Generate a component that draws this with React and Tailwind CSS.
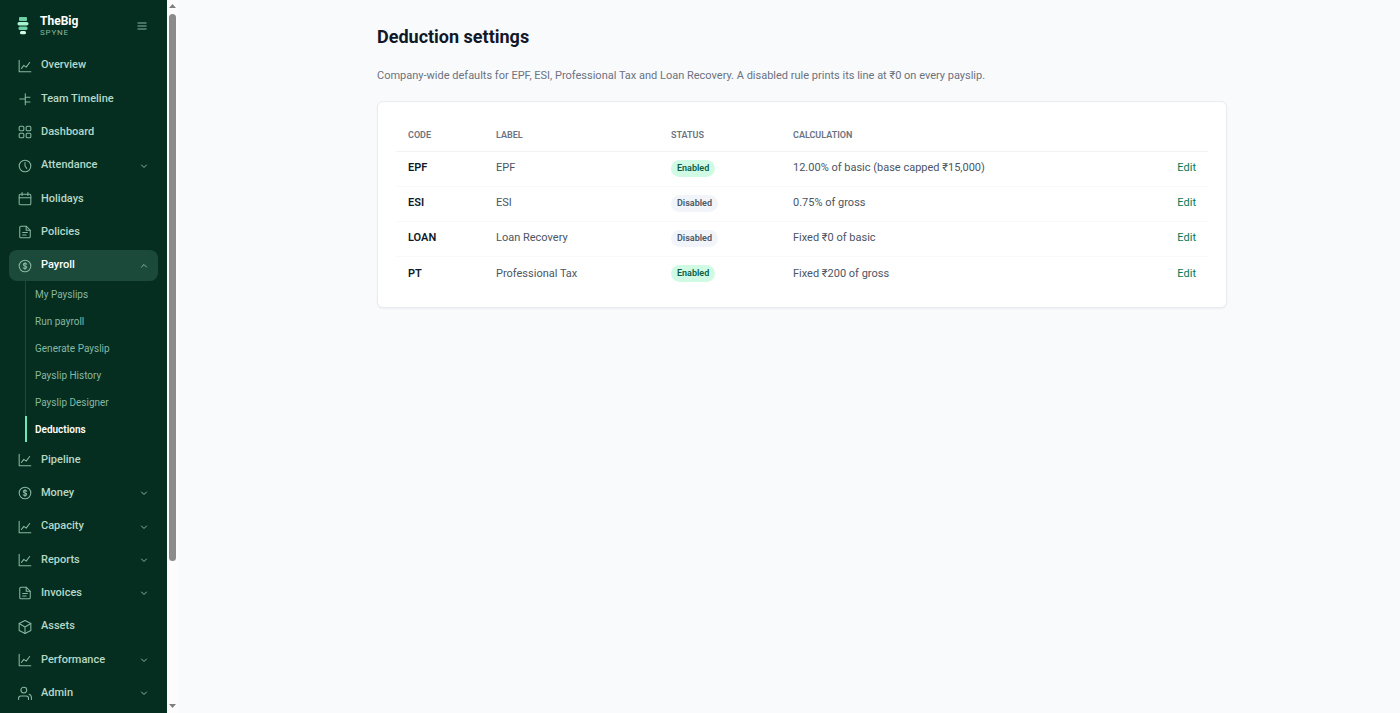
import { useState } from 'react'

const ICONS = {
  chart: (
    <>
      <path d="M2 2v20h20" />
      <path d="m6 16 4-5 4 3 6-8" />
    </>
  ),
  timeline: (
    <>
      <path d="M12.500 3v19" />
      <path d="M3 12h9" />
      <path d="M12.500 9h8" />
      <path d="M12.500 17h8" />
    </>
  ),
  grid: (
    <>
      <rect x="2" y="2" width="8" height="8" rx="2" />
      <rect x="14" y="2" width="8" height="8" rx="2" />
      <rect x="2" y="14" width="8" height="8" rx="2" />
      <rect x="14" y="14" width="8" height="8" rx="2" />
    </>
  ),
  clock: (
    <>
      <circle cx="12" cy="12" r="10" />
      <path d="M12 6v6l3 4" />
    </>
  ),
  calendar: (
    <>
      <rect x="2" y="4" width="20" height="18" rx="2" />
      <path d="M2 10h20M7 1v5M17 1v5" />
    </>
  ),
  file: (
    <>
      <path d="M14 2H5a2 2 0 0 0-2 2v16a2 2 0 0 0 2 2h14a2 2 0 0 0 2-2V9z" />
      <path d="M14 2v7h7M8 13h8M8 17h6" />
    </>
  ),
  coin: (
    <>
      <circle cx="12" cy="12" r="10" />
      <path d="M15 9c-.6-1-1.700-1.500-3-1.500-1.700 0-3 .8-3 2.200 0 3.100 6 1.500 6 4.600 0 1.400-1.300 2.200-3 2.200-1.400 0-2.500-.6-3-1.500M12 6v12" />
    </>
  ),
  box: (
    <>
      <path d="m12 1 10 5v12l-10 5-10-5V6z" />
      <path d="m2 6 10 6 10-6M12 12v11" />
    </>
  ),
  users: (
    <>
      <circle cx="10" cy="7" r="5" />
      <path d="M1 23v-2a4 4 0 0 1 4-4h9a4 4 0 0 1 4 4v2M19 14c3 1 4 3 4 6v3" />
    </>
  ),
}

const NAV = [
  { label: 'Overview', icon: 'chart' },
  { label: 'Team Timeline', icon: 'timeline' },
  { label: 'Dashboard', icon: 'grid' },
  { label: 'Attendance', icon: 'clock', group: true },
  { label: 'Holidays', icon: 'calendar' },
  { label: 'Policies', icon: 'file' },
  {
    label: 'Payroll',
    icon: 'coin',
    group: true,
    children: [
      'My Payslips',
      'Run payroll',
      'Generate Payslip',
      'Payslip History',
      'Payslip Designer',
      'Deductions',
    ],
  },
  { label: 'Pipeline', icon: 'chart' },
  { label: 'Money', icon: 'coin', group: true },
  { label: 'Capacity', icon: 'chart', group: true },
  { label: 'Reports', icon: 'chart', group: true },
  { label: 'Invoices', icon: 'file', group: true },
  { label: 'Assets', icon: 'box' },
  { label: 'Performance', icon: 'chart', group: true },
  { label: 'Admin', icon: 'users', group: true },
]

const RULES = [
  { code: 'EPF', label: 'EPF', enabled: true, calc: '12.00% of basic (base capped ₹15,000)' },
  { code: 'ESI', label: 'ESI', enabled: false, calc: '0.75% of gross' },
  { code: 'LOAN', label: 'Loan Recovery', enabled: false, calc: 'Fixed ₹0 of basic' },
  { code: 'PT', label: 'Professional Tax', enabled: true, calc: 'Fixed ₹200 of gross' },
]

function Icon({ name }) {
  return (
    <svg
      viewBox="0 0 24 24"
      className="size-[14px] shrink-0 overflow-visible text-[#86b8a2]"
      fill="none"
      stroke="currentColor"
      strokeWidth="1.800"
      strokeLinecap="round"
      strokeLinejoin="round"
      aria-hidden="true"
    >
      {ICONS[name]}
    </svg>
  )
}

function Chevron({ up }) {
  return (
    <svg
      viewBox="0 0 8 8"
      className="ml-auto size-2 text-[#86b8a2]"
      fill="none"
      stroke="currentColor"
      strokeLinecap="round"
      strokeLinejoin="round"
      aria-hidden="true"
    >
      <path d={up ? 'm1.500 5 2.500-2.500L6.500 5' : 'm1.500 3 2.500 2.500L6.500 3'} />
    </svg>
  )
}

function Logo() {
  return (
    <svg viewBox="0 0 12 18" className="h-[18px] w-3 shrink-0" aria-hidden="true">
      <rect x="2" y="0" width="8" height="4" rx="1" fill="#6fcfa5" />
      <rect x="0.500" y="5" width="11" height="3.400" rx="1.600" fill="#a7f3d0" />
      <rect x="1.500" y="9.400" width="9" height="3.600" rx="1.500" fill="#6fcfa5" />
      <rect x="3" y="14" width="6" height="3.200" rx="1.500" fill="#d1fae5" />
    </svg>
  )
}

function NavItem({ item, open, onToggle }) {
  const base = 'flex h-[31px] w-full items-center gap-[9px] rounded-lg pr-[10px] pl-[9px] text-[11px] font-medium'

  if (!item.group) {
    return (
      <a href="#" className={`${base} text-[#b5d8c7]`}>
        <Icon name={item.icon} />
        {item.label}
      </a>
    )
  }
  return (
    <button
      type="button"
      aria-expanded={open}
      onClick={onToggle}
      className={open ? `${base} bg-[#1c4a3a] text-white` : `${base} text-[#b5d8c7]`}
    >
      <Icon name={item.icon} />
      {item.label}
      <Chevron up={open} />
    </button>
  )
}

function SubNav({ items }) {
  return (
    <ul className="ml-4 flex flex-col gap-px border-l border-[#1c4a3a]">
      {items.map((label) => (
        <li key={label}>
          <a
            href="#"
            className={
              label === 'Deductions'
                ? '-ml-px flex h-[26px] items-center border-l-2 border-[#6ee7b7] pl-2 text-[10px] font-semibold text-white'
                : 'flex h-[26px] items-center pl-[9px] text-[10px] text-[#86b8a2]'
            }
          >
            {label}
          </a>
        </li>
      ))}
    </ul>
  )
}

function Sidebar() {
  const [openGroup, setOpenGroup] = useState('Payroll')

  return (
    <aside className="flex w-[167px] shrink-0 flex-col bg-[#052e20] px-[9px] pb-1">
      <div className="flex h-[50px] items-center gap-[11px] pt-px pr-[11px] pl-2">
        <Logo />
        <div>
          <p className="text-xs leading-[13px] font-bold text-white">TheBig</p>
          <p className="text-[8px] leading-[9px] tracking-widest text-[#86b8a2]">SPYNE</p>
        </div>
        <button type="button" aria-label="Collapse menu" className="ml-auto text-[#86b8a2]">
          <svg viewBox="0 0 10 10" className="size-[10px]" stroke="currentColor" aria-hidden="true">
            <path d="M.5 2h9M.5 5h9M.5 8h9" />
          </svg>
        </button>
      </div>
      <nav className="flex flex-1 flex-col">
        <ul className="flex flex-1 flex-col justify-between">
          {NAV.map((item) => {
            const open = openGroup === item.label
            return (
              <li key={item.label}>
                <NavItem
                  item={item}
                  open={open}
                  onToggle={() => setOpenGroup(open ? null : item.label)}
                />
                {open && item.children && <SubNav items={item.children} />}
              </li>
            )
          })}
        </ul>
      </nav>
    </aside>
  )
}

function ScrollRail() {
  return (
    <div className="flex w-[11px] shrink-0 flex-col items-center bg-[#fcfcfc] pt-1 pb-[5px]" aria-hidden="true">
      <svg viewBox="0 0 7 4" className="h-1 w-[7px]" fill="#7f7f7f">
        <path d="M3.500 0 7 4H0z" />
      </svg>
      <div className="flex flex-1 flex-col py-[6px]">
        <div className="h-[80%] w-[7px] rounded-full bg-[#8b8b8b]" />
      </div>
      <svg viewBox="0 0 7 4" className="h-1 w-[7px]" fill="#7f7f7f">
        <path d="M0 0h7L3.500 4z" />
      </svg>
    </div>
  )
}

function StatusBadge({ enabled }) {
  return (
    <span
      className={
        enabled
          ? 'inline-block rounded-full bg-[#d1fae5] px-[6px] text-[9px] leading-[17px] font-semibold text-[#065f46]'
          : 'inline-block rounded-full bg-[#f1f5f9] px-[6px] text-[9px] leading-[17px] font-semibold text-[#4b5563]'
      }
    >
      {enabled ? 'Enabled' : 'Disabled'}
    </span>
  )
}

export default function App() {
  return (
    <div className="flex min-h-screen bg-[#f9fafc] font-[Roboto,'Noto_Sans',sans-serif]">
      <Sidebar />
      <ScrollRail />
      <main className="flex-1 pl-[26px]">
        <div className="mx-auto max-w-[850px] pt-6">
          <h1 className="text-lg leading-[26px] font-bold text-[#111827]">Deduction settings</h1>
          <p className="mt-[17px] text-[11px] leading-[17px] text-[#6b7280]">
            Company-wide defaults for EPF, ESI, Professional Tax and Loan Recovery. A disabled rule
            prints its line at ₹0 on every payslip.
          </p>
          <section className="mt-[17px] rounded-md border border-[#e9ecf0] bg-white px-[18px] pt-[18px] pb-4 shadow-xs">
            <table className="w-full table-fixed text-left text-[11px]">
              <thead>
                <tr className="h-[31px] border-b border-[#f0f2f4] text-[9px] text-[#6b7280]">
                  <th className="w-[88px] pl-3 font-semibold">CODE</th>
                  <th className="w-[175px] pl-3 font-semibold">LABEL</th>
                  <th className="w-[122px] pl-3 font-semibold">STATUS</th>
                  <th className="pl-3 font-semibold">CALCULATION</th>
                  <th className="w-[60px]" aria-label="Actions" />
                </tr>
              </thead>
              <tbody>
                {RULES.map((rule) => (
                  <tr key={rule.code} className="h-[35px] border-b border-[#f8f9fa] last:border-b-0">
                    <td className="pl-3 font-semibold text-[#111827]">{rule.code}</td>
                    <td className="pl-3 text-[#4b5563]">{rule.label}</td>
                    <td className="pl-3">
                      <StatusBadge enabled={rule.enabled} />
                    </td>
                    <td className="pl-3 text-[#4b5563]">{rule.calc}</td>
                    <td className="pr-3 text-right">
                      <button type="button" className="text-[#047857]">
                        Edit
                      </button>
                    </td>
                  </tr>
                ))}
              </tbody>
            </table>
          </section>
        </div>
      </main>
    </div>
  )
}
